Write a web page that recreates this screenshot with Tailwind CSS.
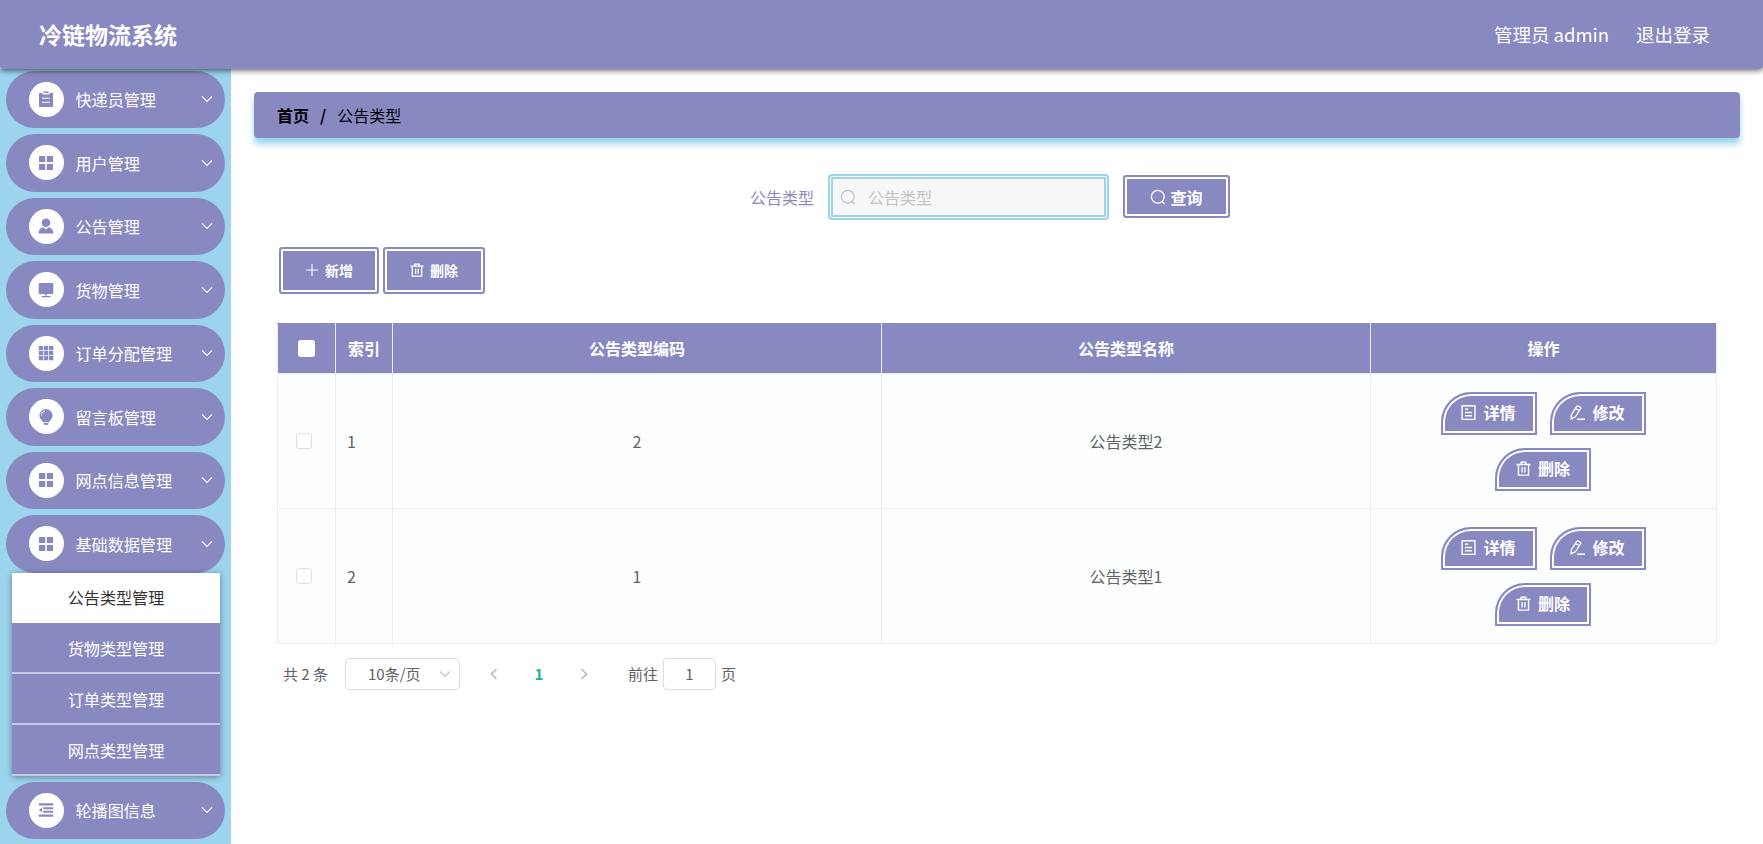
<!DOCTYPE html>
<html lang="zh-CN">
<head>
    <meta charset="UTF-8">
    <meta name="viewport" content="width=device-width, initial-scale=1.0">
    <title>冷链物流系统</title>
    <script src="https://cdn.jsdelivr.net/npm/@tailwindcss/browser@4"></script>
</head>
<body class="h-screen overflow-hidden bg-white font-['Noto_Sans_CJK_SC',sans-serif] text-base text-[#606266]">
    <!-- icon sprites -->
    <svg class="hidden">
        <symbol id="i-down" viewBox="0 0 12 12"><path d="M1 3.4l5 5 5-5" fill="none" stroke="currentColor" stroke-width="1.1"/></symbol>
        <symbol id="i-order" viewBox="0 0 16 16"><path d="M1 2h3.5v1.5h7V2H15v14H1z" fill="currentColor"/><path d="M5.5.5h5V2h-5z" fill="currentColor"/><path d="M4 7.2h8M4 11.3h8" stroke="#fff" stroke-width="1"/></symbol>
        <symbol id="i-menu" viewBox="0 0 16 16"><path d="M1 1h6.2v6H1zM8.8 1H15v6H8.8zM1 9h6.2v6H1zM8.8 9H15v6H8.8z" fill="currentColor"/></symbol>
        <symbol id="i-user" viewBox="0 0 16 16"><circle cx="8" cy="4.8" r="4.3" fill="currentColor"/><path d="M.5 15.5c0-3.5 2-5.7 4.7-6.3L8 11.4l2.8-2.2c2.7.6 4.7 2.8 4.7 6.300z" fill="currentColor"/></symbol>
        <symbol id="i-platform" viewBox="0 0 16 16"><path d="M.7 1h14.6v11H.7zM7 12h2v1.5h-2zM3.5 14h9v1.3h-9z" fill="currentColor"/></symbol>
        <symbol id="i-grid" viewBox="0 0 16 16"><path d="M.8 1h4.3v4.2H.8zM5.9 1h4.3v4.2H5.9zM11 1h4.3v4.2H11zM.8 6h4.3v4.2H.8zM5.9 6h4.3v4.2H5.9zM11 6h4.3v4.2H11zM.8 11h4.3v4.2H.8zM5.9 11h4.3v4.2H5.9zM11 11h4.3v4.2H11z" fill="currentColor"/></symbol>
        <symbol id="i-bulb" viewBox="0 0 16 16"><path d="M8 0a6.6 6.6 0 0 1 6.600 6.500c0 2.800-2.100 4.300-3.600 6.700H5C3.500 10.800 1.400 9.300 1.400 6.500A6.600 6.600 0 0 1 8 0zM5.300 14h5.400L9.500 16h-3z" fill="currentColor"/><path d="M3.300 6.300A4.200 4.200 0 0 1 6.800 2.200" fill="none" stroke="#fff" stroke-width="1"/></symbol>
        <symbol id="i-fold" viewBox="0 0 16 16"><path d="M.8 1.200h14.500v2.400H.8zM5.200 5.200h10.100v2H5.200zM5.200 8.800h10.100v2H5.200zM.8 12.400h14.500v2.400H.8zM.8 8l3.200-2.200v4.400z" fill="currentColor"/></symbol>
        <symbol id="i-search" viewBox="0 0 16 16"><path d="M12 12.5l2.500 2.500" stroke="currentColor" stroke-width="1.3"/><circle cx="7.8" cy="7.8" r="6.4" fill="none" stroke="currentColor" stroke-width="1.3"/></symbol>
        <symbol id="i-plus" viewBox="0 0 14 14"><path d="M7 1v12M1 7h12" stroke="currentColor" stroke-width="1.1"/></symbol>
        <symbol id="i-trash" viewBox="0 0 14 14"><path d="M.5 3.2h13M2.300 3.200v10h9.400v-10M4.800 3V1.200h4.400V3M5.700 5.700v5M8.300 5.700v5" fill="none" stroke="currentColor" stroke-width="1.3"/></symbol>
        <symbol id="i-doc" viewBox="0 0 14 14"><path d="M1 .7h12v12.800H1zM3.700 4h3M3.700 7h6.600M3.700 10h6.600" fill="none" stroke="currentColor" stroke-width="1.3"/></symbol>
        <symbol id="i-edit" viewBox="0 0 14 14"><path d="M6.600 13.300H14M1 13l.4-4.200L6.300 1.300q.6-.8 1.400-.3l1.900 1.200q.8.500.3 1.300L5 11zM5.200 3.200l3.500 2.200" fill="none" stroke="currentColor" stroke-width="1.2"/></symbol>
    </svg>

    <header class="relative z-10 flex h-[69px] items-center justify-between rounded-b bg-[#8989c2] pr-[53px] pl-[39px] text-white shadow-[0_1px_6px_rgba(0,0,0,0.7)]">
        <h1 class="text-[23px] font-bold">冷链物流系统</h1>
        <div class="flex gap-[27px] pt-px text-[18.5px]">
            <span>管理员 admin</span>
            <span>退出登录</span>
        </div>
    </header>

    <div class="flex h-[775px]">
        <aside class="w-[231px] shrink-0 bg-[#9bd4ec] px-1.5 pt-[1.5px] text-white">
            <ul id="menu" class="flex flex-col gap-[6px]"></ul>
        </aside>

        <main class="min-w-0 flex-1 px-[23px] pt-[23px]">
            <nav class="flex h-[46px] items-center rounded bg-[#8989c2] px-[23px] text-black shadow-[0_6px_6px_#9bd4ec]">
                <b>首页</b>
                <b class="mx-[11px]">/</b>
                <span>公告类型</span>
            </nav>

            <div class="px-[23px]">
                <div class="mt-[35px] flex h-[47px] items-center pl-[473px]">
                    <label class="w-[78px] shrink-0 text-[#8989c2]">公告类型</label>
                    <div class="h-[46px] w-[281px] shrink-0 rounded border-2 border-[#9bd4ec] p-px">
                        <div class="flex h-full items-center border-2 border-[#9bd4ec] bg-[#f7f7f7] pl-[7px] text-[#c0c4cc]">
                            <svg class="mr-[12px] size-4"><use href="#i-search"/></svg>公告类型
                        </div>
                    </div>
                    <button class="ml-[14px] flex h-[43px] w-[107px] shrink-0 items-center justify-center gap-1 rounded-[3px] border-2 border-[#8989c2] bg-[#8989c2] font-bold text-white inset-shadow-[0_0_0_2px_#fff]"><svg class="size-4"><use href="#i-search"/></svg>查询</button>
                </div>

                <div class="mt-[27px] flex gap-[4px] pl-[2px] text-sm font-bold text-white">
                    <button class="flex h-[47px] w-[100px] items-center justify-center gap-[6px] rounded-[3px] border-2 border-[#8989c2] bg-[#8989c2] pb-px inset-shadow-[0_0_0_2px_#fff]"><svg class="size-3.5"><use href="#i-plus"/></svg>新增</button>
                    <button class="flex h-[47px] w-[102px] items-center justify-center gap-[6px] rounded-[3px] border-2 border-[#8989c2] bg-[#8989c2] pb-px inset-shadow-[0_0_0_2px_#fff]"><svg class="size-3.5"><use href="#i-trash"/></svg>删除</button>
                </div>

                <table class="mt-[29px] w-[1440px] table-fixed border-collapse">
                    <colgroup>
                        <col class="w-[58px]"><col class="w-[57px]"><col class="w-[489px]"><col class="w-[489px]"><col>
                    </colgroup>
                    <thead>
                        <tr class="h-[50px] bg-[#8989c2] text-white">
                            <th class="border border-[#e8eaf4] border-t-[#8989c2] border-l-[#ebeef5]"><span class="mx-auto block size-[17px] rounded-[3px] bg-white"></span></th>
                            <th class="border border-[#e8eaf4] border-t-[#8989c2] pb-0.5">索引</th>
                            <th class="border border-[#e8eaf4] border-t-[#8989c2] pb-0.5">公告类型编码</th>
                            <th class="border border-[#e8eaf4] border-t-[#8989c2] pb-0.5">公告类型名称</th>
                            <th class="border border-[#e8eaf4] border-t-[#8989c2] pb-0.5">操作</th>
                        </tr>
                    </thead>
                    <tbody id="rows"></tbody>
                </table>

                <div class="mt-[14px] flex h-8 items-center pl-[6px] text-[15px]">
                    <span class="w-[62px]">共 2 条</span>
                    <div class="flex h-8 w-[115px] items-center justify-between rounded border border-[#dcdfe6] pr-2 pl-[22px]"><span>10条/页</span><svg class="size-3 text-[#c0c4cc]"><use href="#i-down"/></svg></div>
                    <svg class="ml-[28px] size-3 text-[#b4b8c0]" viewBox="0 0 12 12"><path d="M8.500 1L3.500 6l5 5" fill="none" stroke="currentColor" stroke-width="1.600"/></svg>
                    <b class="w-[78px] text-center text-[#1bb394]">1</b>
                    <svg class="size-3 text-[#b4b8c0]" viewBox="0 0 12 12"><path d="M3.500 1l5 5-5 5" fill="none" stroke="currentColor" stroke-width="1.600"/></svg>
                    <span class="ml-[38px] w-[30px]">前往</span>
                    <span class="mx-[5px] flex h-8 w-[53px] items-center justify-center rounded border border-[#dcdfe6]">1</span>
                    <span>页</span>
                </div>
            </div>
        </main>
    </div>

    <script>
        const menu = [
            ['order', '快递员管理'], ['menu', '用户管理'], ['user', '公告管理'], ['platform', '货物管理'],
            ['grid', '订单分配管理'], ['bulb', '留言板管理'], ['menu', '网点信息管理'],
            ['menu', '基础数据管理', ['公告类型管理', '货物类型管理', '订单类型管理', '网点类型管理']],
            ['fold', '轮播图信息'],
        ];
        document.getElementById('menu').innerHTML = menu.map(([icon, name, children]) => `
            <li>
                <div class="flex h-[57.5px] items-center rounded-full bg-[#8989c2] pr-[12px] pl-[22.5px]">
                    <span class="mr-[12px] flex size-[35px] items-center justify-center rounded-full bg-white text-[#8989c2]"><svg class="size-4"><use href="#i-${icon}"/></svg></span>
                    <span class="flex-1 text-[16.1px]">${name}</span>
                    <svg class="size-3"><use href="#i-down"/></svg>
                </div>
                ${children ? `<ul class="relative mr-[5px] ml-[6px] shadow-[0_1px_6px_rgba(0,0,0,0.4)]">${children.map((c, i) => `
                    <li class="flex h-[50.8px] items-center justify-center border-b-2 pt-px text-[16.1px] ${i ? 'border-[#c9c8e6] bg-[#8989c2]' : 'border-white bg-white text-[#333]'}">${c}</li>`).join('')}</ul>` : ''}
            </li>`).join('');

        const btn = (icon, text) => `<button class="flex h-[43px] w-[96px] items-center justify-center gap-[7px] rounded-tl-[30px] border-2 border-[#8989c2] bg-[#8989c2] pb-0.5 font-bold text-white inset-shadow-[0_0_0_2px_#fff]"><svg class="size-[15px]"><use href="#i-${icon}"/></svg>${text}</button>`;
        document.getElementById('rows').innerHTML = [[2, '公告类型2'], [1, '公告类型1']].map(([code, name], i) => `
            <tr class="h-[135px] bg-[#fcfefd] text-center">
                <td class="border border-[#ebeef5]"><span class="ml-[18px] block size-4 rounded-[3px] border border-[#dcdfe6] bg-white"></span></td>
                <td class="border border-[#ebeef5] pl-[11px] text-left">${i + 1}</td>
                <td class="border border-[#ebeef5]">${code}</td>
                <td class="border border-[#ebeef5]">${name}</td>
                <td class="border border-[#ebeef5]"><div class="flex flex-wrap justify-center gap-x-[13px] gap-y-[13px] pr-[61px] pl-[60px]">${btn('doc', '详情')}${btn('edit', '修改')}${btn('trash', '删除')}</div></td>
            </tr>`).join('');
    </script>
</body>
</html>
